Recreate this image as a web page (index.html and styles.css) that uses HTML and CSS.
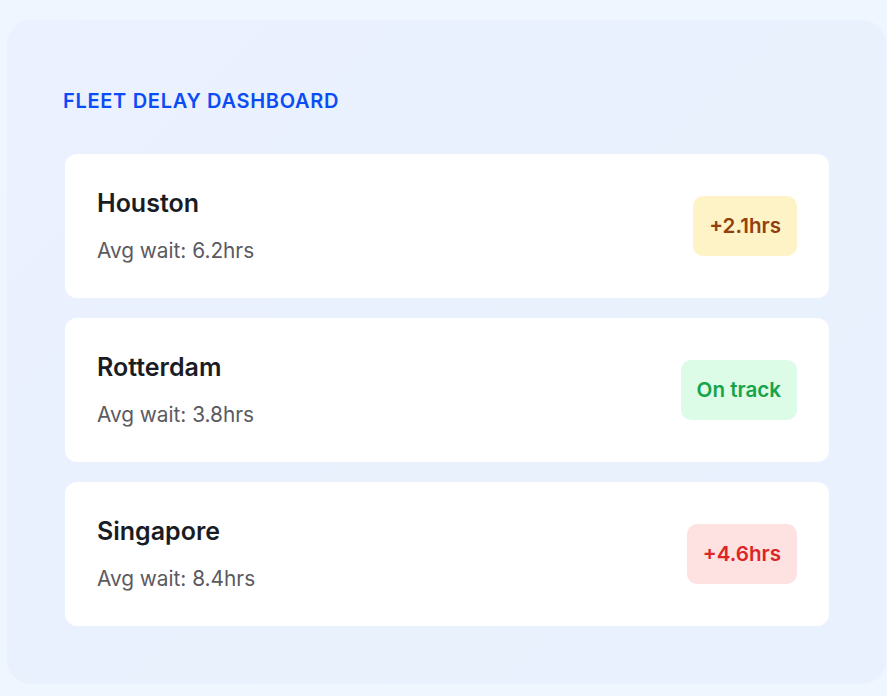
FILE: index.html
```html
<!DOCTYPE html>
<html lang="en">
<head>
    <meta charset="UTF-8">
    <title>Fleet Delay Dashboard</title>
    <link rel="stylesheet" href="styles.css">
</head>
<body>
<div class="panel">
    <h1 class="panel-title">FLEET DELAY DASHBOARD</h1>
    <div class="port-list">
        <div class="port-card">
            <div class="port-info">
                <h2 class="port-name">Houston</h2>
                <p class="port-wait">Avg wait: 6.2hrs</p>
            </div>
            <span class="delay-badge delay-warn">+2.1hrs</span>
        </div>
        <div class="port-card">
            <div class="port-info">
                <h2 class="port-name">Rotterdam</h2>
                <p class="port-wait">Avg wait: 3.8hrs</p>
            </div>
            <span class="delay-badge delay-ok">On track</span>
        </div>
        <div class="port-card">
            <div class="port-info">
                <h2 class="port-name">Singapore</h2>
                <p class="port-wait">Avg wait: 8.4hrs</p>
            </div>
            <span class="delay-badge delay-bad">+4.6hrs</span>
        </div>
    </div>
</div>
</body>
</html>
```

FILE: styles.css
```css
body {
    font-family: 'Inter', 'Noto Sans', sans-serif;
    margin: 0;
    padding: 20px 1px 12px 7px;
    background-color: #f0f6ff;
}
.panel {
    background: linear-gradient(135deg, #ebf1fe 0%, #e8f1fd 100%);
    border-radius: 24px;
    padding: 69px 57px 58px 58px;
    height: 664px;
    box-sizing: border-box;
}
.panel-title {
    font-size: 20px;
    font-weight: 600;
    letter-spacing: 0.7px;
    color: #0a4cf5;
    margin: 0 0 41px -2px;
    line-height: 24px;
}
.port-list {
    display: flex;
    flex-direction: column;
    gap: 20px;
}
.port-card {
    display: flex;
    align-items: center;
    justify-content: space-between;
    background-color: #ffffff;
    border-radius: 12px;
    padding: 33px 32px 33px 32px;
}
.port-name {
    font-size: 25px;
    font-weight: 600;
    color: #1a1c24;
    margin: 0 0 18px 0;
    line-height: 32px;
}
.port-wait {
    font-size: 20.8px;
    color: #5a5a60;
    margin: 0;
    line-height: 28px;
}
.delay-badge {
    font-size: 20.6px;
    font-weight: 600;
    line-height: 28px;
    padding: 16px 16px;
    border-radius: 10px;
}
.delay-warn {
    background-color: #fef3c7;
    color: #92400e;
}
.delay-ok {
    background-color: #dcfce7;
    color: #16a34a;
}
.delay-bad {
    background-color: #fee2e2;
    color: #dc2626;
}
```
